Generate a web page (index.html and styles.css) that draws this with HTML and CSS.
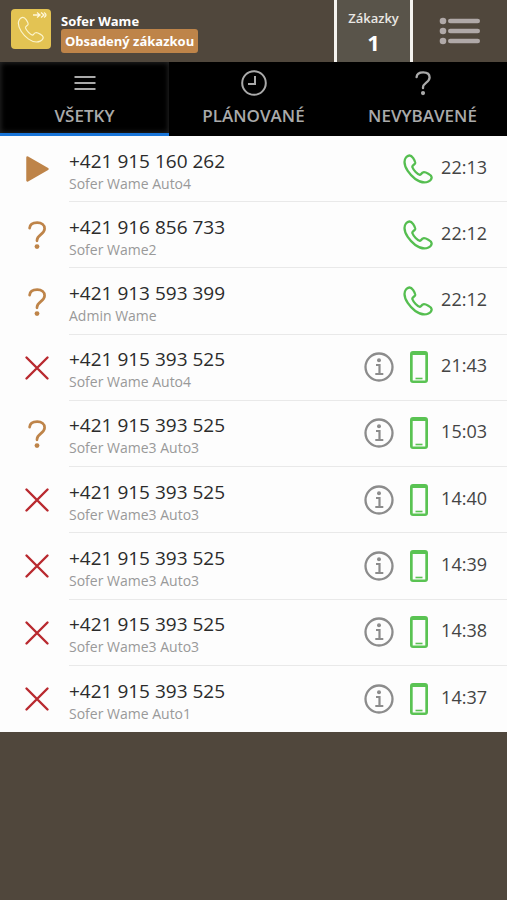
FILE: index.html
```html
<!DOCTYPE html>
<html lang="sk">
<head>
<meta charset="utf-8">
<meta name="viewport" content="width=device-width, initial-scale=1">
<title>Hovory</title>
<link rel="stylesheet" href="styles.css">
</head>
<body>
<svg class="sprite" aria-hidden="true">
  <symbol id="play" viewBox="0 0 30 30"><path d="M5.500 3.500 25.500 15 5.500 26.500Z" fill="currentColor" stroke="currentColor" stroke-width="2.500" stroke-linejoin="round"/></symbol>
  <symbol id="question" viewBox="0 0 30 30"><path d="M7.600 8.200C7.900 4.500 11 2.700 15.200 2.700c4.500 0 7.400 2.300 7.400 6 0 5.800-7.600 6-7.600 11.500v.6" fill="none" stroke="currentColor" stroke-width="2.700" stroke-linecap="round"/><circle cx="15" cy="26.600" r="2.400" fill="currentColor"/></symbol>
  <symbol id="cross" viewBox="0 0 30 30"><path d="M4.500 4.500 25.500 25.500M25.500 4.500 4.500 25.500" fill="none" stroke="currentColor" stroke-width="2.400" stroke-linecap="round"/></symbol>
  <symbol id="phone" viewBox="0 0 30 30"><path d="M6.300 1.500C4 1.600 1.500 4.300 1.500 8c0 5.500 5 12.800 10.800 17 4.200 3 9.400 4.300 13.200 2.500 2.200-1 3.300-2.600 3.100-4.400-.2-1.500-1.700-2.400-3.300-3.300-1.700-1-3.700-1.800-5-1.500-1.800.4-2 2.400-3.400 2.600-2.200-.3-6.600-4.900-7.600-7.900-.2-2 2.600-2.300 2.900-4 .2-1.500-1-3.300-2-4.800C9 2.500 7.900 1.400 6.300 1.500Z" fill="none" stroke="currentColor" stroke-width="var(--line, 2.300)" stroke-linejoin="round"/></symbol>
  <symbol id="mobile" viewBox="0 0 18 32"><path fill="currentColor" fill-rule="evenodd" d="M3 0h12a3 3 0 0 1 3 3v26a3 3 0 0 1-3 3H3a3 3 0 0 1-3-3V3a3 3 0 0 1 3-3ZM2.700 4V29.500h12.600V4Z"/><path d="M5.500 27.500h7" stroke="currentColor" stroke-width="1.600"/></symbol>
  <symbol id="info" viewBox="0 0 30 30"><circle cx="15" cy="15" r="13.500" fill="none" stroke="currentColor" stroke-width="2.300"/><circle cx="15" cy="8.300" r="2" fill="currentColor"/><path d="M12 13h3.500v8.500M11.300 22h8" fill="none" stroke="currentColor" stroke-width="2.200"/></symbol>
</svg>

<header class="topbar">
  <div class="driver">
    <svg class="logo" viewBox="0 0 40 40" aria-hidden="true">
      <rect width="40" height="40" rx="4" fill="#e3c353"/>
      <g transform="translate(5 7) scale(.98)" color="#fbf4cc"><use href="#phone" width="30" height="28"/></g>
      <path d="M22 6h6M26 3.500 29 6l-3 2.500M30 3.500 33 6l-3 2.500M33 3.500q4 2.500 0 5" fill="none" stroke="#fff8da" stroke-width="1.300"/>
    </svg>
    <div class="who">
      <span class="name">Sofer Wame</span>
      <span class="status">Obsadený zákazkou</span>
    </div>
  </div>
  <button class="orders" type="button"><span>Zákazky</span><strong>1</strong></button>
  <button class="menu" type="button" aria-label="Menu">
    <svg viewBox="0 0 42 28" aria-hidden="true"><g fill="#b0a9a8"><circle cx="4" cy="4" r="3.300"/><circle cx="4" cy="14" r="3.300"/><circle cx="4" cy="24" r="3.300"/><rect x="9" y="1.700" width="32" height="4.600" rx="2.300"/><rect x="9" y="11.700" width="32" height="4.600" rx="2.300"/><rect x="9" y="21.700" width="32" height="4.600" rx="2.300"/></g></svg>
  </button>
</header>

<nav class="tabs">
  <a class="tab active" href="#vsetky"><svg viewBox="0 0 26 26" aria-hidden="true"><path d="M2.500 7h21M2.500 13h21M2.500 19h21" stroke="currentColor" stroke-width="2.200"/></svg><span>VŠETKY</span></a>
  <a class="tab" href="#planovane"><svg viewBox="0 0 26 26" aria-hidden="true"><circle cx="13" cy="13" r="11.800" fill="none" stroke="currentColor" stroke-width="2"/><path d="M14 6v8H7" fill="none" stroke="currentColor" stroke-width="2"/></svg><span>PLÁNOVANÉ</span></a>
  <a class="tab" href="#nevybavene"><svg aria-hidden="true"><use href="#question"/></svg><span>NEVYBAVENÉ</span></a>
</nav>

<main>
<ul class="calls">
  <li class="call"><svg class="state amber"><use href="#play"/></svg><div class="body"><div class="text"><span class="number">+421 915 160 262</span><span class="from">Sofer Wame Auto4</span></div><svg class="handset"><use href="#phone"/></svg><time>22:13</time></div></li>
  <li class="call"><svg class="state amber"><use href="#question"/></svg><div class="body"><div class="text"><span class="number">+421 916 856 733</span><span class="from">Sofer Wame2</span></div><svg class="handset"><use href="#phone"/></svg><time>22:12</time></div></li>
  <li class="call"><svg class="state amber"><use href="#question"/></svg><div class="body"><div class="text"><span class="number">+421 913 593 399</span><span class="from">Admin Wame</span></div><svg class="handset"><use href="#phone"/></svg><time>22:12</time></div></li>
  <li class="call"><svg class="state red"><use href="#cross"/></svg><div class="body"><div class="text"><span class="number">+421 915 393 525</span><span class="from">Sofer Wame Auto4</span></div><svg class="info"><use href="#info"/></svg><svg class="mobile"><use href="#mobile"/></svg><time>21:43</time></div></li>
  <li class="call"><svg class="state amber"><use href="#question"/></svg><div class="body"><div class="text"><span class="number">+421 915 393 525</span><span class="from">Sofer Wame3 Auto3</span></div><svg class="info"><use href="#info"/></svg><svg class="mobile"><use href="#mobile"/></svg><time>15:03</time></div></li>
  <li class="call"><svg class="state red"><use href="#cross"/></svg><div class="body"><div class="text"><span class="number">+421 915 393 525</span><span class="from">Sofer Wame3 Auto3</span></div><svg class="info"><use href="#info"/></svg><svg class="mobile"><use href="#mobile"/></svg><time>14:40</time></div></li>
  <li class="call"><svg class="state red"><use href="#cross"/></svg><div class="body"><div class="text"><span class="number">+421 915 393 525</span><span class="from">Sofer Wame3 Auto3</span></div><svg class="info"><use href="#info"/></svg><svg class="mobile"><use href="#mobile"/></svg><time>14:39</time></div></li>
  <li class="call"><svg class="state red"><use href="#cross"/></svg><div class="body"><div class="text"><span class="number">+421 915 393 525</span><span class="from">Sofer Wame3 Auto3</span></div><svg class="info"><use href="#info"/></svg><svg class="mobile"><use href="#mobile"/></svg><time>14:38</time></div></li>
  <li class="call"><svg class="state red"><use href="#cross"/></svg><div class="body"><div class="text"><span class="number">+421 915 393 525</span><span class="from">Sofer Wame Auto1</span></div><svg class="info"><use href="#info"/></svg><svg class="mobile"><use href="#mobile"/></svg><time>14:37</time></div></li>
</ul>
</main>
</body>
</html>
```
FILE: styles.css
```css
* { box-sizing: border-box; }

body {
  margin: 0;
  min-height: 100vh;
  background: #50473c;
  font-family: "Open Sans", "Noto Sans", sans-serif;
}

.sprite { position: absolute; width: 0; height: 0; }

svg { display: block; flex: none; }

button {
  margin: 0;
  padding: 0;
  border: 0;
  background: none;
  color: inherit;
  font: inherit;
}

.topbar {
  display: flex;
  height: 62px;
  color: #fff;
}

.driver {
  display: flex;
  flex: 1;
  align-items: center;
  gap: 10px;
  padding: 0 11px 4px;
}

.logo { width: 40px; height: 40px; --line: 1.3; }

.who {
  display: flex;
  flex-direction: column;
  align-items: flex-start;
  padding-top: 7px;
}

.name {
  font-size: 13px;
  font-weight: 700;
  line-height: 16px;
}

.status {
  padding: 0 4px;
  border-radius: 3px;
  background: #be8449;
  font-size: 13px;
  font-weight: 700;
  line-height: 24px;
}

.orders {
  display: flex;
  flex-direction: column;
  align-items: center;
  width: 79px;
  padding-top: 8px;
  border: solid #f5f3ef;
  border-width: 0 3px;
  background: #59544a;
}

.orders span {
  color: #e9e7e3;
  font-size: 13px;
  font-weight: 600;
  line-height: 20px;
}

.orders strong { font-size: 22px; line-height: 28px; }

.menu {
  display: grid;
  place-items: center;
  width: 94px;
}

.menu svg { width: 42px; height: 28px; }

.tabs {
  display: grid;
  grid-template-columns: repeat(3, 1fr);
  background: #000;
}

.tab {
  display: flex;
  flex-direction: column;
  align-items: center;
  gap: 8px;
  padding: 8px 0 5px;
  border-bottom: 3px solid #000;
  color: #aaa;
  font-size: 17px;
  font-weight: 600;
  line-height: 24px;
  text-decoration: none;
}

.tab svg { width: 26px; height: 26px; }

.active {
  border-bottom-color: #1975d8;
  box-shadow: inset 0 0 5px 1px #242424;
}

.calls {
  display: grid;
  grid-auto-rows: 1fr;
  min-height: 596px;
  margin: 0;
  padding: 0;
  background: #fdfdfd;
  list-style: none;
}

.call {
  display: flex;
  align-items: stretch;
  gap: 17px;
  padding-left: 22px;
}

.call svg { align-self: center; }

.state { width: 30px; height: 30px; }
.amber { color: #be8449; }
.red { color: #b9292f; }

.body {
  display: flex;
  flex: 1;
  align-items: center;
  padding-right: 20px;
  border-bottom: 1px solid #e9e9e9;
}

.call:last-child .body { border-bottom: 0; }

.text {
  display: flex;
  flex: 1;
  flex-direction: column;
  padding-top: 6px;
}

.number {
  color: #2b2b2b;
  font-size: 19px;
  line-height: 24px;
}

.from {
  color: #999;
  font-size: 14px;
  line-height: 22px;
}

.info { width: 30px; height: 30px; margin-right: 16px; color: #8c8c8c; }
.mobile { width: 18px; height: 32px; margin-right: 13px; color: #5ac353; }
.handset { width: 30px; height: 30px; margin-right: 8px; color: #55be50; }

time {
  padding-bottom: 4px;
  color: #444;
  font-size: 18px;
  line-height: 24px;
}
```
